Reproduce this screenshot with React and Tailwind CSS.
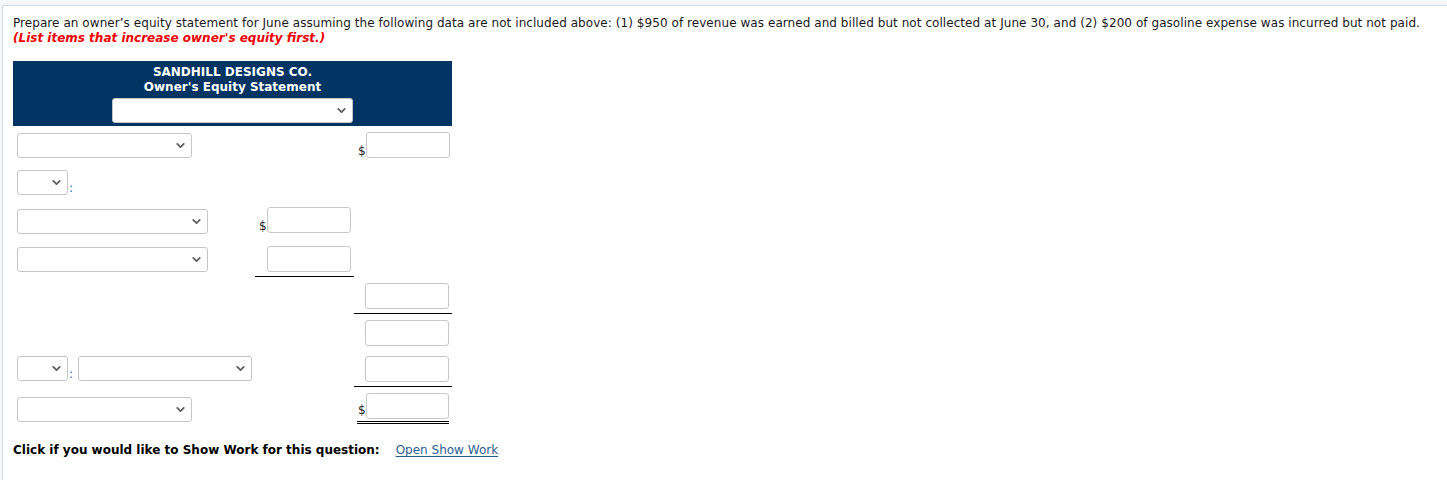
import React from 'react';
import { ChevronDown } from 'lucide-react';

const Select = ({ w, className = '' }) => (
  <div
    className={`h-[25px] border border-[#c6c6c6] rounded-[3px] bg-white flex items-center justify-end pr-[4px] ${className}`}
    style={{ width: w }}
  >
    <ChevronDown size={13} strokeWidth={3.4} className="text-[#5f5f5f]" />
  </div>
);

const Input = () => (
  <div className="w-[84px] h-[26px] border border-[#c8c8c8] rounded-[3px] bg-white" />
);

const Dollar = () => <span className="text-[12px] leading-[13px] text-[#222]">$</span>;

const Colon = () => (
  <span className="w-[10px] pl-[1px] leading-[13px] text-[#2b6aa8]">:</span>
);

export default function App() {
  return (
    <div
      className="min-h-screen bg-[#f5f7fa] pt-[5px] pl-[2px] text-[12px] text-[#1a1a1a]"
      style={{ fontFamily: '"DejaVu Sans", Verdana, sans-serif' }}
    >
      <div className="bg-white border-t border-l border-[#d3dbe4] min-h-[475px] pl-[10px] pt-[10px]">
        <p className="leading-[15px] tracking-[0.06px]">
          Prepare an owner’s equity statement for June assuming the following data are not included above: (1) $950 of revenue was earned and billed but not collected at June 30, and (2) $200 of gasoline expense was incurred but not paid.
        </p>
        <p className="leading-[15px] text-[#ee0000] font-bold italic">
          (List items that increase owner's equity first.)
        </p>

        <div className="w-[439px] mt-[15px]">
          {/* header */}
          <div className="bg-[#003462] h-[65px] pt-[4px] flex flex-col items-center text-white font-bold">
            <div className="leading-[15px]">SANDHILL DESIGNS CO.</div>
            <div className="leading-[15px]">Owner's Equity Statement</div>
            <Select w={241} className="mt-[3px]" />
          </div>

          {/* row 1 */}
          <div className="grid grid-cols-[242px_99px_98px] h-[39px] items-start">
            <div className="pl-[4px] pt-[7px]"><Select w={175} /></div>
            <div />
            <div className="pl-[4px] pt-[6px] flex items-end"><Dollar /><Input /></div>
          </div>

          {/* row 2 */}
          <div className="grid grid-cols-[242px_99px_98px] h-[37px] items-start">
            <div className="pl-[4px] pt-[5px] flex items-end">
              <Select w={51} />
              <Colon />
            </div>
            <div />
            <div />
          </div>

          {/* row 3 */}
          <div className="grid grid-cols-[242px_99px_98px] h-[38px] items-start">
            <div className="pl-[4px] pt-[7px]"><Select w={191} /></div>
            <div className="pl-[4px] pt-[5px] flex items-end"><Dollar /><Input /></div>
            <div />
          </div>

          {/* row 4 */}
          <div className="grid grid-cols-[242px_99px_98px] h-[37px] items-start">
            <div className="pl-[4px] pt-[7px]"><Select w={191} /></div>
            <div className="pl-[12px] pt-[6px] pb-[4px] border-b border-black"><Input /></div>
            <div />
          </div>

          {/* row 5 */}
          <div className="grid grid-cols-[242px_99px_98px] h-[37px] items-start">
            <div />
            <div />
            <div className="pl-[11px] pt-[6px] pb-[4px] border-b border-black"><Input /></div>
          </div>

          {/* row 6 */}
          <div className="grid grid-cols-[242px_99px_98px] h-[37px] items-start">
            <div />
            <div />
            <div className="pl-[11px] pt-[6px]"><Input /></div>
          </div>

          {/* row 7 */}
          <div className="grid grid-cols-[242px_99px_98px] h-[36px] items-start">
            <div className="pl-[4px] pt-[5px] flex items-end">
              <Select w={51} />
              <Colon />
              <Select w={174} />
            </div>
            <div />
            <div className="pl-[11px] pt-[5px] pb-[4px] border-b border-black"><Input /></div>
          </div>

          {/* row 8 */}
          <div className="grid grid-cols-[242px_99px_98px] h-[39px] items-start">
            <div className="pl-[4px] pt-[10px]"><Select w={175} /></div>
            <div />
            <div className="pt-[6px]">
              <div className="ml-[3px] w-[92px] flex items-end pb-[2px] border-b-[3px] border-double border-black">
                <span className="ml-[1px]"><Dollar /></span><Input />
              </div>
            </div>
          </div>
        </div>

        <div className="mt-[17px] leading-[15px] flex">
          <span className="font-bold text-black">Click if you would like to Show Work for this question:</span>
          <a className="ml-[16px] text-[#2a5e92] underline underline-offset-2 cursor-pointer">Open Show Work</a>
        </div>
      </div>
    </div>
  );
}
